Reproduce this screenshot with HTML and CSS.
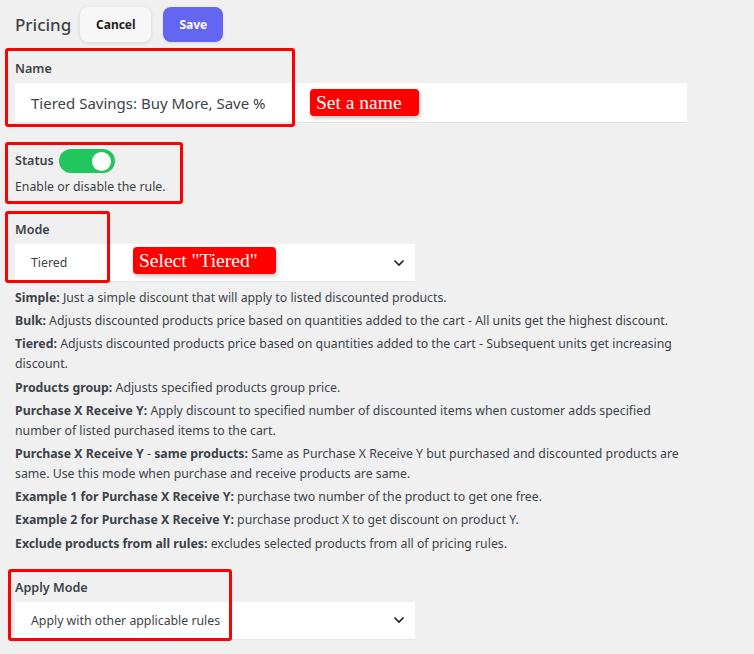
FILE: index.html
```html
<!DOCTYPE html>
<html lang="en">
<head>
    <meta charset="UTF-8">
    <meta name="viewport" content="width=device-width, initial-scale=1.0">
    <title>Pricing</title>
    <link rel="stylesheet" href="styles.css">
</head>
<body>
    <div id="page">
        <header class="page-header">
            <h1 class="page-title">Pricing</h1>
            <button class="btn btn-cancel">Cancel</button>
            <button class="btn btn-save">Save</button>
        </header>

        <div class="field field-name">
            <label class="field-label" for="name-input">Name</label>
            <input type="text" id="name-input" class="text-input" value="Tiered Savings: Buy More, Save %">
        </div>

        <div class="field field-status">
            <div class="status-row">
                <span class="field-label">Status</span>
                <span class="toggle"><span class="toggle-knob"></span></span>
            </div>
            <p class="field-help">Enable or disable the rule.</p>
        </div>

        <div class="field field-mode">
            <span class="field-label">Mode</span>
            <div class="select-box">
                <span>Tiered</span>
                <svg class="chevron" width="12" height="8" viewBox="0 0 12 8"><polyline points="1.5,1.5 6,6 10.5,1.5" fill="none" stroke="#1e1e1e" stroke-width="1.6"/></svg>
            </div>
        </div>

        <div class="mode-help">
            <p><b>Simple:</b> Just a simple discount that will apply to listed discounted products.</p>
            <p><b>Bulk:</b> Adjusts discounted products price based on quantities added to the cart - All units get the highest discount.</p>
            <p><b>Tiered:</b> Adjusts discounted products price based on quantities added to the cart - Subsequent units get increasing discount.</p>
            <p><b>Products group:</b> Adjusts specified products group price.</p>
            <p><b>Purchase X Receive Y:</b> Apply discount to specified number of discounted items when customer adds specified number of listed purchased items to the cart.</p>
            <p><b>Purchase X Receive Y</b> - <b>same products:</b> Same as Purchase X Receive Y but purchased and discounted products are same. Use this mode when purchase and receive products are same.</p>
            <p><b>Example 1 for Purchase X Receive Y:</b> purchase two number of the product to get one free.</p>
            <p><b>Example 2 for Purchase X Receive Y:</b> purchase product X to get discount on product Y.</p>
            <p><b>Exclude products from all rules:</b> excludes selected products from all of pricing rules.</p>
        </div>

        <div class="field field-apply">
            <span class="field-label">Apply Mode</span>
            <div class="select-box">
                <span>Apply with other applicable rules</span>
                <svg class="chevron" width="12" height="8" viewBox="0 0 12 8"><polyline points="1.5,1.5 6,6 10.5,1.5" fill="none" stroke="#1e1e1e" stroke-width="1.6"/></svg>
            </div>
        </div>

        <!-- annotation overlays -->
        <div class="mark mark-name"></div>
        <div class="mark mark-status"></div>
        <div class="mark mark-mode"></div>
        <div class="mark mark-apply"></div>
        <div class="callout callout-name">Set a name</div>
        <div class="callout callout-mode">Select "Tiered"</div>
    </div>
</body>
</html>
```

FILE: styles.css
```css
body, html {
    margin: 0;
    padding: 0;
    background-color: #f0f0f0;
    font-family: 'Noto Sans', 'Open Sans', sans-serif;
    color: #3c434a;
}

#page {
    position: relative;
    padding: 7px 15px 0 15px;
    height: 647px;
    overflow: hidden;
}

.page-header {
    display: flex;
    align-items: center;
    height: 35px;
}

.page-title {
    margin: 0 9px 0 0;
    font-size: 17px;
    font-weight: 500;
    color: #3c434a;
}

.btn {
    height: 35px;
    border: none;
    border-radius: 8px;
    font-family: 'Noto Sans', sans-serif;
    font-size: 12px;
    font-weight: 700;
    cursor: pointer;
}

.btn-cancel {
    width: 71px;
    background-color: #f7f7f7;
    color: #1e1e1e;
    box-shadow: 0 1px 4px rgba(0,0,0,0.12);
    margin-right: 12px;
}

.btn-save {
    width: 60px;
    background-color: #6366f1;
    color: #fff;
    box-shadow: 0 1px 3px rgba(0,0,0,0.1);
}

.field-label {
    display: block;
    font-size: 12.6px;
    font-weight: 600;
    line-height: 18px;
    color: #3c434a;
}

.field-name {
    margin-top: 18px;
}

.field-name .field-label {
    margin-bottom: 5px;
}

.text-input {
    display: block;
    width: 672px;
    height: 40px;
    box-sizing: border-box;
    border: none;
    border-bottom: 1px solid #e2e2e2;
    background: #fff;
    padding: 0 16px;
    font-family: 'Noto Sans', sans-serif;
    font-size: 15px;
    color: #3c434a;
    outline: none;
}

.field-status {
    margin-top: 26px;
}

.status-row {
    display: flex;
    align-items: center;
    gap: 5px;
}

.toggle {
    position: relative;
    width: 56px;
    height: 24px;
    border-radius: 12px;
    background-color: #22c55e;
}

.toggle-knob {
    position: absolute;
    top: 2.5px;
    right: 4px;
    width: 19px;
    height: 19px;
    border-radius: 50%;
    background: #fff;
}

.field-help {
    margin: 4px 0 0 0;
    font-size: 12.3px;
    line-height: 20px;
}

.field-mode {
    margin-top: 24px;
}

.field-mode .field-label,
.field-apply .field-label {
    margin-bottom: 5px;
}

.select-box {
    display: flex;
    align-items: center;
    justify-content: space-between;
    width: 400px;
    height: 38px;
    box-sizing: border-box;
    padding: 0 10px 0 16px;
    background: #fff;
    border-bottom: 1px solid #e6e6e6;
    font-size: 12.3px;
    color: #3c434a;
}

.mode-help {
    margin-top: 6px;
    width: 668px;
    font-size: 12.3px;
    line-height: 20px;
}

.mode-help p {
    margin: 0 0 3.2px 0;
}

.mode-help b {
    font-weight: 700;
    color: #3c434a;
}

.field-apply {
    margin-top: 25px;
}

/* annotation overlays */
.mark {
    position: absolute;
    border: 3px solid #ff0000;
    border-radius: 3px;
    box-sizing: border-box;
}

.mark-name { left: 5px; top: 48px; width: 290px; height: 79px; }
.mark-status { left: 5px; top: 142px; width: 178px; height: 62px; }
.mark-mode { left: 5px; top: 211px; width: 105px; height: 72px; }
.mark-apply { left: 8px; top: 569px; width: 224px; height: 72px; }

.callout {
    position: absolute;
    background-color: #ff0000;
    color: #fff;
    font-family: 'Liberation Serif', serif;
    font-size: 19.5px;
    font-weight: 400;
    line-height: 27px;
    padding: 0 6px;
    border-radius: 4px;
    box-shadow: 1px 2px 4px rgba(0,0,0,0.25);
}

.callout-name { left: 310px; top: 89px; width: 97px; }
.callout-mode { left: 133px; top: 247px; width: 131px; }
```
